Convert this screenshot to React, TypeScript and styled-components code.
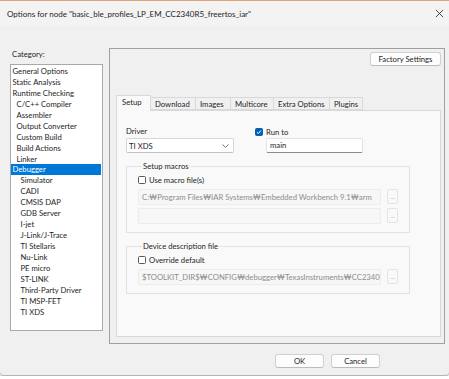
import React from "react";
import styled, { createGlobalStyle } from "styled-components";

const Global = createGlobalStyle`
  html, body { margin: 0; padding: 0; background: #ffffff; }
  body { font-family: Lato, "Noto Sans CJK KR", "Noto Sans", sans-serif; font-size: 7.7px; color: #1e1e1e; }
  * { box-sizing: border-box; }
`;

const Win = styled.div`
  width: 449px;
  height: 376px;
  background: #f0f0f0;
  border-top: 1px solid #dca27a;
  border-bottom: 1px solid #b4b4b4;
  border-radius: 0 0 4px 4px;
  box-shadow: 0 1px 2px rgba(0,0,0,0.25);
  display: flex;
  flex-direction: column;
`;

const TitleBar = styled.div`
  height: 25px;
  background: #f3f3f3;
  display: flex;
  align-items: center;
  justify-content: space-between;
  padding: 0 5px 0 7px;
  font-size: 8px;
`;

const CloseX = styled.svg`
  width: 9px;
  height: 9px;
`;

const Body = styled.div`
  display: flex;
  align-items: flex-start;
  padding: 22px 4px 0 10px;
`;

const LeftCol = styled.div`
  width: 93px;
  display: flex;
  flex-direction: column;
  gap: 4px;
`;

const Label = styled.div`
  line-height: 12px;
  padding-left: 2px;
`;

const List = styled.div`
  height: 267px;
  background: #ffffff;
  border: 1px solid #a9a9a9;
  padding: 1px 1px 0 0;
`;

const Item = styled.div<{ $level: number; $sel?: boolean }>`
  height: 10.94px;
  line-height: 10.94px;
  padding-left: ${(p) => 1.5 + p.$level * 4}px;
  background: ${(p) => (p.$sel ? "#0078d7" : "transparent")};
  color: ${(p) => (p.$sel ? "#ffffff" : "#1e1e1e")};
  white-space: nowrap;
`;

const Outer = styled.div`
  margin-left: 6px;
  width: 336px;
  height: 296px;
  border: 1px solid #a0a0a0;
  display: flex;
  flex-direction: column;
  padding: 3px 3px 6px 6px;
`;

const TopRow = styled.div`
  display: flex;
  justify-content: flex-end;
  margin-bottom: 29px;
`;

const Btn = styled.button<{ $w: number }>`
  width: ${(p) => p.$w}px;
  height: 14px;
  padding: 0;
  font: inherit;
  color: #1e1e1e;
  background: #fdfdfd;
  border: 1px solid #d0d0d0;
  border-bottom-color: #bcbcbc;
  border-radius: 3px;
`;

const Tabs = styled.div`
  display: flex;
  align-items: flex-end;
  height: 15px;
  position: relative;
  z-index: 1;
`;

const Tab = styled.div<{ $w: number; $sel?: boolean }>`
  width: ${(p) => p.$w}px;
  height: ${(p) => (p.$sel ? 16 : 13)}px;
  margin-bottom: ${(p) => (p.$sel ? -1 : 0)}px;
  padding-left: ${(p) => (p.$sel ? 5 : 4)}px;
  line-height: 12px;
  background: ${(p) => (p.$sel ? "#f9f9f9" : "#f0f0f0")};
  border: 1px solid #d9d9d9;
  border-bottom: ${(p) => (p.$sel ? "none" : "1px solid #d9d9d9")};
  border-left: ${(p) => (p.$sel ? "1px solid #d9d9d9" : "none")};
  white-space: nowrap;
`;

const Page = styled.div`
  flex: 1;
  background: #f9f9f9;
  border: 1px solid #d9d9d9;
  padding: 14px 0 0 9px;
  display: flex;
  flex-direction: column;
`;

const Row = styled.div`
  display: flex;
  gap: 21px;
`;

const Field = styled.div`
  display: flex;
  flex-direction: column;
`;

const FieldLabel = styled.div`
  line-height: 12px;
  height: 13px;
`;

const Combo = styled.div`
  width: 108px;
  height: 15px;
  background: #ffffff;
  border: 1px solid #d6d6d6;
  border-bottom-color: #c0c0c0;
  border-radius: 2px;
  display: flex;
  align-items: center;
  justify-content: space-between;
  padding: 0 4px 0 2px;
`;

const Check = styled.span<{ $on?: boolean }>`
  width: 8px;
  height: 8px;
  border-radius: 1.5px;
  border: 1px solid ${(p) => (p.$on ? "#005fb8" : "#5a5a5a")};
  background: ${(p) => (p.$on ? "#005fb8" : "#ffffff")};
  display: inline-flex;
  align-items: center;
  justify-content: center;
  flex: none;
`;

const CheckRow = styled.div`
  display: flex;
  align-items: center;
  gap: 3px;
  height: 13px;
`;

const Edit = styled.div`
  width: 97px;
  height: 15px;
  margin-left: 11px;
  background: #ffffff;
  border: 1px solid #e3e3e3;
  border-bottom: 1px solid #8a8a8a;
  border-radius: 2px;
  padding-left: 3px;
  line-height: 13px;
`;

const Group = styled.fieldset<{ $h: number; $mt: number }>`
  margin: ${(p) => p.$mt}px 0 0 0;
  width: 284px;
  height: ${(p) => p.$h}px;
  border: 1px solid #e2e2e2;
  padding: 2px 0 0 11px;
  display: flex;
  flex-direction: column;
  gap: 3px;
`;

const Legend = styled.legend`
  padding: 0 1px;
  margin-left: 4px;
  line-height: 10px;
`;

const PathRow = styled.div`
  display: flex;
  gap: 6px;
`;

const PathBox = styled.div`
  width: 243px;
  height: 16px;
  background: #f7f7f7;
  border: 1px solid #ececec;
  border-radius: 2px;
  color: #8c8c8c;
  padding-left: 3px;
  line-height: 14px;
  white-space: nowrap;
  overflow: hidden;
`;

const Dots = styled.div`
  width: 11px;
  height: 15px;
  border: 1px solid #e4e4e4;
  border-radius: 2px;
  background: #f9f9f9;
  color: #a0a0a0;
  font-size: 6px;
  display: flex;
  align-items: flex-end;
  justify-content: center;
  padding-bottom: 3px;
`;

const Footer = styled.div`
  display: flex;
  justify-content: flex-end;
  gap: 7px;
  padding: 10px 69px 0 0;
`;

const items: [string, number][] = [
  ["General Options", 0],
  ["Static Analysis", 0],
  ["Runtime Checking", 0],
  ["C/C++ Compiler", 1],
  ["Assembler", 1],
  ["Output Converter", 1],
  ["Custom Build", 1],
  ["Build Actions", 1],
  ["Linker", 1],
  ["Debugger", 0],
  ["Simulator", 2],
  ["CADI", 2],
  ["CMSIS DAP", 2],
  ["GDB Server", 2],
  ["I-jet", 2],
  ["J-Link/J-Trace", 2],
  ["TI Stellaris", 2],
  ["Nu-Link", 2],
  ["PE micro", 2],
  ["ST-LINK", 2],
  ["Third-Party Driver", 2],
  ["TI MSP-FET", 2],
  ["TI XDS", 2],
];

const tabs: [string, number][] = [
  ["Setup", 35],
  ["Download", 45],
  ["Images", 35],
  ["Multicore", 43],
  ["Extra Options", 56],
  ["Plugins", 33],
];

export default function App() {
  return (
    <>
      <Global />
      <Win>
        <TitleBar>
          <span>Options for node "basic_ble_profiles_LP_EM_CC2340R5_freertos_iar"</span>
          <CloseX viewBox="0 0 10 10">
            <path d="M1 1L9 9M9 1L1 9" stroke="#1e1e1e" strokeWidth="0.9" />
          </CloseX>
        </TitleBar>
        <Body>
          <LeftCol>
            <Label>Category:</Label>
            <List>
              {items.map(([t, l]) => (
                <Item key={t} $level={l} $sel={t === "Debugger"}>
                  {t}
                </Item>
              ))}
            </List>
          </LeftCol>
          <Outer>
            <TopRow>
              <Btn $w={71}>Factory Settings</Btn>
            </TopRow>
            <Tabs>
              {tabs.map(([t, w], i) => (
                <Tab key={t} $w={w} $sel={i === 0}>
                  {t}
                </Tab>
              ))}
            </Tabs>
            <Page>
              <Row>
                <Field>
                  <FieldLabel>Driver</FieldLabel>
                  <Combo>
                    <span>TI XDS</span>
                    <svg width="7" height="4" viewBox="0 0 7 4">
                      <path d="M0.5 0.5L3.5 3.3L6.5 0.5" fill="none" stroke="#555" strokeWidth="0.8" />
                    </svg>
                  </Combo>
                </Field>
                <Field>
                  <CheckRow>
                    <Check $on>
                      <svg width="6" height="6" viewBox="0 0 6 6">
                        <path d="M1 3.2L2.4 4.5L5 1.5" fill="none" stroke="#fff" strokeWidth="1" />
                      </svg>
                    </Check>
                    <span>Run to</span>
                  </CheckRow>
                  <Edit>main</Edit>
                </Field>
              </Row>
              <Group $h={72} $mt={8}>
                <Legend>Setup macros</Legend>
                <CheckRow>
                  <Check />
                  <span>Use macro file(s)</span>
                </CheckRow>
                <PathRow>
                  <PathBox>C:₩Program Files₩IAR Systems₩Embedded Workbench 9.1₩arm</PathBox>
                  <Dots>...</Dots>
                </PathRow>
                <PathRow>
                  <PathBox />
                  <Dots>...</Dots>
                </PathRow>
              </Group>
              <Group $h={53} $mt={8}>
                <Legend>Device description file</Legend>
                <CheckRow>
                  <Check />
                  <span>Override default</span>
                </CheckRow>
                <PathRow>
                  <PathBox>$TOOLKIT_DIR$₩CONFIG₩debugger₩TexasInstruments₩CC2340</PathBox>
                  <Dots>...</Dots>
                </PathRow>
              </Group>
            </Page>
          </Outer>
        </Body>
        <Footer>
          <Btn $w={49}>OK</Btn>
          <Btn $w={49}>Cancel</Btn>
        </Footer>
      </Win>
    </>
  );
}
